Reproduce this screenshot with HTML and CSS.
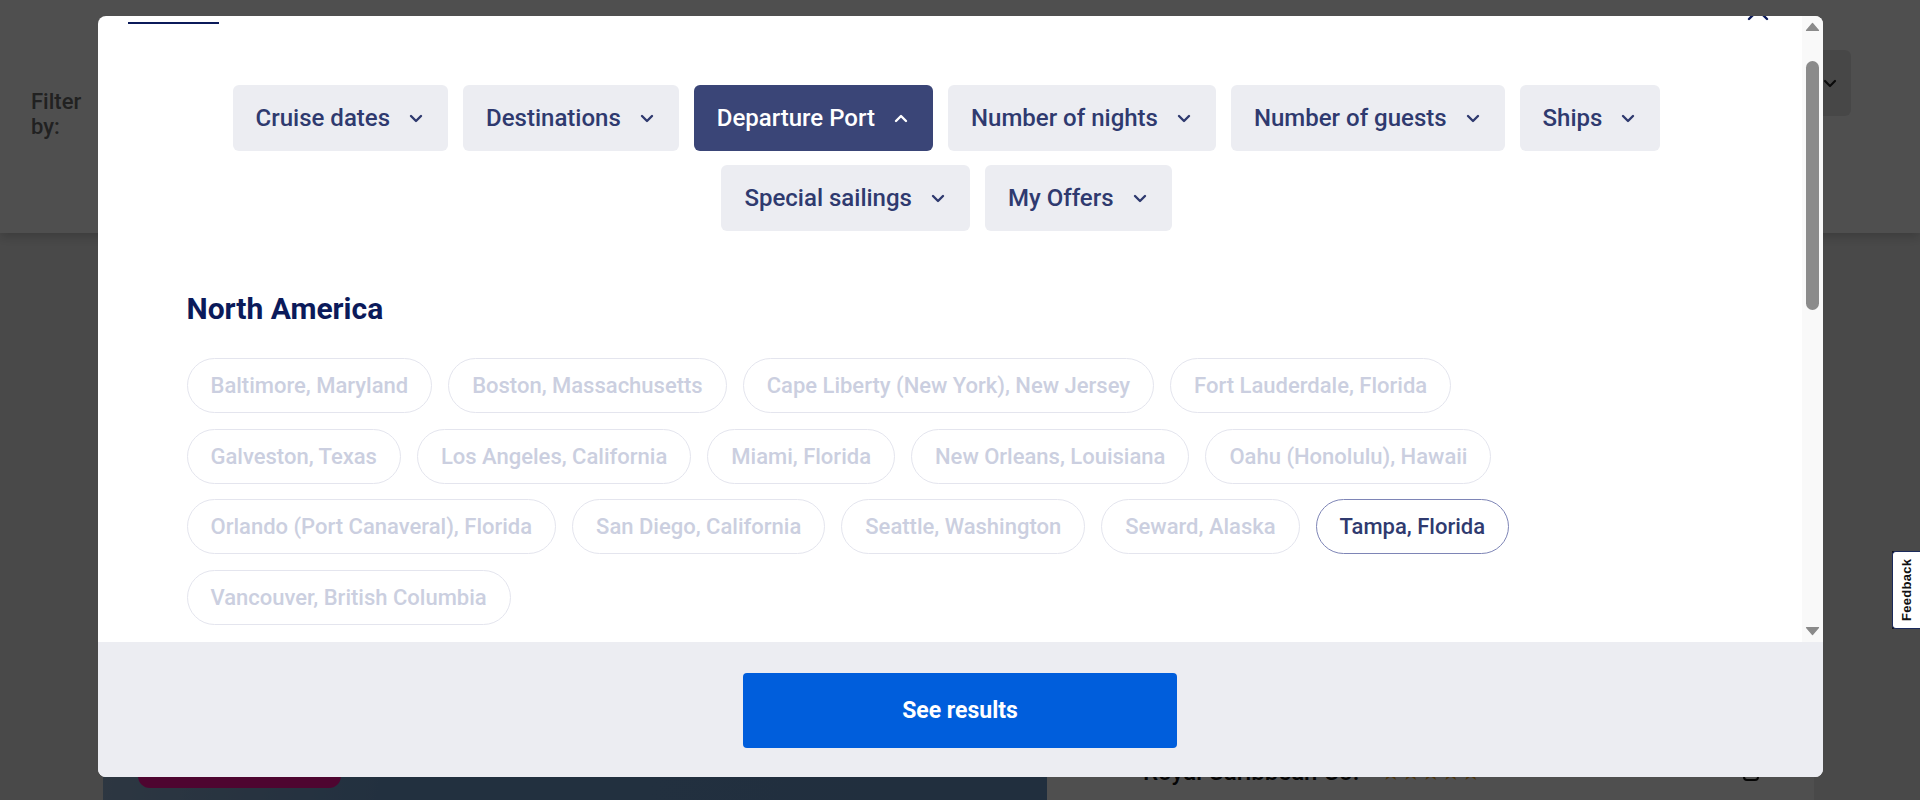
FILE: index.html
```html
<!DOCTYPE html>
<html lang="en">
<head>
<meta charset="utf-8">
<title>Find a cruise – Filters</title>
<link rel="stylesheet" href="styles.css">
</head>
<body>
<div class="page">
  <header class="page-header">
    <div class="filter-label">Filter<br>by:</div>
    <button class="sort-btn" type="button" aria-label="Sort">
      <svg width="14" height="9" viewBox="0 0 14 9"><polyline points="2,2 7,7 12,2" fill="none" stroke="#222" stroke-width="2.2" stroke-linecap="round" stroke-linejoin="round"/></svg>
    </button>
  </header>
  <main class="results">
    <article class="card">
      <div class="card-image">
        <span class="badge">Best price</span>
      </div>
      <div class="card-info">
        <div class="card-row">
          <span class="card-title">Royal Caribbean Co.</span>
          <span class="stars">★★★★★</span>
          <span class="card-actions">
            <svg width="16" height="10" viewBox="0 0 16 10"><polyline points="2,2 8,8 14,2" fill="none" stroke="#111" stroke-width="2"/></svg>
            <svg width="18" height="20" viewBox="0 0 18 20"><rect x="2" y="2" width="14" height="16" rx="3" fill="none" stroke="#111" stroke-width="2"/></svg>
          </span>
        </div>
      </div>
    </article>
  </main>
</div>

<div class="overlay">
  <div class="modal" role="dialog" aria-label="Filters">
    <div class="modal-body">
      <div class="modal-scroll" id="modalScroll">
        <div class="modal-inner">
          <div class="modal-head">
            <span class="tab">Filters</span>
            <button class="close-btn" type="button" aria-label="Close">
              <svg width="24" height="24" viewBox="0 0 24 24"><path d="M3 3 L21 21 M21 3 L3 21" fill="none" stroke="#0b1a5a" stroke-width="2.4" stroke-linecap="round"/></svg>
            </button>
          </div>

          <div class="filter-bar">
            <button class="filter-btn" type="button">Cruise dates <svg class="chev" width="14" height="9" viewBox="0 0 14 9"><polyline points="2,2 7,7 12,2"/></svg></button>
            <button class="filter-btn" type="button">Destinations <svg class="chev" width="14" height="9" viewBox="0 0 14 9"><polyline points="2,2 7,7 12,2"/></svg></button>
            <button class="filter-btn active" type="button">Departure Port <svg class="chev" width="14" height="9" viewBox="0 0 14 9"><polyline points="2,7 7,2 12,7"/></svg></button>
            <button class="filter-btn" type="button">Number of nights <svg class="chev" width="14" height="9" viewBox="0 0 14 9"><polyline points="2,2 7,7 12,2"/></svg></button>
            <button class="filter-btn" type="button">Number of guests <svg class="chev" width="14" height="9" viewBox="0 0 14 9"><polyline points="2,2 7,7 12,2"/></svg></button>
            <button class="filter-btn" type="button">Ships <svg class="chev" width="14" height="9" viewBox="0 0 14 9"><polyline points="2,2 7,7 12,2"/></svg></button>
            <button class="filter-btn" type="button">Special sailings <svg class="chev" width="14" height="9" viewBox="0 0 14 9"><polyline points="2,2 7,7 12,2"/></svg></button>
            <button class="filter-btn" type="button">My Offers <svg class="chev" width="14" height="9" viewBox="0 0 14 9"><polyline points="2,2 7,7 12,2"/></svg></button>
          </div>

          <section class="region">
            <h2 class="region-title">North America</h2>
            <div class="pills">
              <span class="pill">Baltimore, Maryland</span>
              <span class="pill">Boston, Massachusetts</span>
              <span class="pill">Cape Liberty (New York), New Jersey</span>
              <span class="pill">Fort Lauderdale, Florida</span>
              <span class="pill">Galveston, Texas</span>
              <span class="pill">Los Angeles, California</span>
              <span class="pill">Miami, Florida</span>
              <span class="pill">New Orleans, Louisiana</span>
              <span class="pill">Oahu (Honolulu), Hawaii</span>
              <span class="pill">Orlando (Port Canaveral), Florida</span>
              <span class="pill">San Diego, California</span>
              <span class="pill">Seattle, Washington</span>
              <span class="pill">Seward, Alaska</span>
              <span class="pill selected">Tampa, Florida</span>
              <span class="pill">Vancouver, British Columbia</span>
            </div>
          </section>

          <section class="region">
            <h2 class="region-title">Caribbean</h2>
            <div class="pills">
              <span class="pill">San Juan, Puerto Rico</span>
              <span class="pill">Bridgetown, Barbados</span>
            </div>
          </section>

          <section class="region">
            <h2 class="region-title">Europe</h2>
            <div class="pills">
              <span class="pill">Amsterdam, Netherlands</span>
              <span class="pill">Barcelona, Spain</span>
              <span class="pill">Civitavecchia (Rome), Italy</span>
              <span class="pill">Copenhagen, Denmark</span>
              <span class="pill">Southampton, England</span>
              <span class="pill">Ravenna, Italy</span>
            </div>
          </section>

          <section class="region">
            <h2 class="region-title">Asia &amp; South Pacific</h2>
            <div class="pills">
              <span class="pill">Singapore</span>
              <span class="pill">Sydney, Australia</span>
              <span class="pill">Brisbane, Australia</span>
              <span class="pill">Tokyo (Yokohama), Japan</span>
            </div>
          </section>
        </div>
      </div>
      <div class="scrollbar" aria-hidden="true">
        <div class="sb-btn">
          <svg width="21" height="21" viewBox="0 0 21 21"><polygon points="4.5,14.5 10.5,7.5 16.5,14.5" fill="#8b8b8b" stroke="#8b8b8b" stroke-width="1.2" stroke-linejoin="round"/></svg>
        </div>
        <div class="sb-track"><div class="sb-thumb"></div></div>
        <div class="sb-btn">
          <svg width="21" height="21" viewBox="0 0 21 21"><polygon points="4.5,6.5 10.5,13.5 16.5,6.5" fill="#8b8b8b" stroke="#8b8b8b" stroke-width="1.2" stroke-linejoin="round"/></svg>
        </div>
      </div>
    </div>
    <div class="modal-footer">
      <button class="see-results" type="button">See results</button>
    </div>
  </div>
</div>

<aside class="feedback">Feedback</aside>

<script src="script.js"></script>
</body>
</html>
```

FILE: styles.css
```css
* { box-sizing: border-box; }

html, body {
  margin: 0;
  height: 100%;
}

body {
  font-family: Roboto, "Liberation Sans", Arial, sans-serif;
  background: #ebebeb;
  overflow: hidden;
}

button { font-family: inherit; cursor: pointer; }

/* ---------- background page ---------- */
.page-header {
  height: 233px;
  background: #fff;
  display: flex;
  align-items: flex-start;
  box-shadow: 0 4px 10px rgba(0, 0, 0, 0.18);
}

.filter-label {
  margin: 89px 0 0 31px;
  font-size: 22px;
  line-height: 25px;
  color: #6b6b6b;
  font-weight: 500;
}

.sort-btn {
  margin: 50px 69px 0 auto;
  width: 66px;
  height: 66px;
  border: 0;
  border-radius: 6px;
  background: #e5e5e5;
  display: flex;
  align-items: center;
  justify-content: flex-end;
  padding-right: 14px;
}

.results {
  padding: 57px 106px 0 103px;
}

.card {
  display: flex;
  height: 540px;
}

.card-image {
  position: relative;
  width: 944px;
  background: linear-gradient(100deg, #9bb6d3 0%, #6f9ccc 35%, #6a97c8 100%);
}

.badge {
  position: absolute;
  left: 35px;
  top: 451px;
  width: 203px;
  height: 47px;
  border-radius: 12px;
  background: #fb109b;
  color: #fff;
  font-size: 16px;
  display: flex;
  align-items: center;
  justify-content: center;
}

.card-info {
  flex: 1;
  background: #fff;
  padding: 468px 54px 0 96px;
}

.card-row {
  display: flex;
  align-items: center;
  gap: 22px;
}

.card-title {
  font-size: 24px;
  line-height: 28px;
  color: #111;
  font-weight: 500;
}

.stars {
  color: #f5a623;
  font-size: 22px;
}

.card-actions {
  margin-left: auto;
  display: flex;
  align-items: center;
  gap: 48px;
}

/* ---------- modal ---------- */
.overlay {
  position: fixed;
  inset: 0;
  background: rgba(0, 0, 0, 0.69);
  display: flex;
  justify-content: center;
  align-items: flex-start;
  padding-top: 16px;
}

.modal {
  width: 1725px;
  height: 761px;
  background: #fff;
  border-radius: 8px;
  overflow: hidden;
  display: flex;
  flex-direction: column;
}

.modal-body {
  flex: 1;
  min-height: 0;
  display: flex;
}

.modal-scroll {
  flex: 1;
  overflow: hidden;
}

.scrollbar {
  width: 21px;
  background: #f9f9f9;
  display: flex;
  flex-direction: column;
}

.sb-btn {
  height: 21px;
  display: flex;
}

.sb-track {
  flex: 1;
  display: flex;
  justify-content: center;
}

.sb-thumb {
  margin-top: 24px;
  width: 13px;
  height: 249px;
  border-radius: 7px;
  background: #8b8b8b;
}

.modal-inner {
  min-height: 1468px;
  padding-bottom: 60px;
}

.modal-head {
  height: 68px;
  padding: 30px 32px 0 30px;
  display: flex;
  justify-content: space-between;
  align-items: flex-end;
}

.tab {
  min-width: 91px;
  font-size: 22px;
  line-height: 36px;
  font-weight: 700;
  color: #0b1a5a;
  border-bottom: 2px solid #0b1a5a;
  text-align: center;
}

.close-btn {
  width: 24px;
  height: 24px;
  padding: 0;
  margin-bottom: 2px;
  border: 0;
  background: none;
  display: flex;
}

.filter-bar {
  margin-top: 61px;
  padding: 0 90px 0 84px;
  display: flex;
  flex-wrap: wrap;
  justify-content: center;
  gap: 14px 15px;
}

.filter-btn {
  height: 66px;
  padding: 0 25px 0 23px;
  border: 0;
  border-radius: 6px;
  background: #ecedf2;
  color: #2f3a6f;
  font-size: 24px;
  font-weight: 500;
  display: inline-flex;
  align-items: center;
  gap: 19px;
}

.filter-btn .chev polyline {
  fill: none;
  stroke: currentColor;
  stroke-width: 2.4;
  stroke-linecap: round;
  stroke-linejoin: round;
}

.filter-btn.active {
  background: #3a4577;
  color: #fff;
}

.region {
  padding: 0 205px 0 89px;
  margin-top: 61px;
}

.region + .region { margin-top: 48px; }

.region-title {
  margin: 0;
  font-size: 30px;
  line-height: 34px;
  font-weight: 700;
  color: #0b1a5a;
}

.pills {
  margin-top: 32px;
  display: flex;
  flex-wrap: wrap;
  gap: 15.7px 16px;
}

.pill {
  height: 55px;
  padding: 0 23px;
  border: 1px solid #e4e5ee;
  border-radius: 28px;
  background: #fff;
  color: #cbcfe0;
  font-size: 22px;
  font-weight: 500;
  display: inline-flex;
  align-items: center;
}

.pill.selected {
  border-color: #7e85b6;
  color: #2f3a6f;
}

.modal-footer {
  height: 135px;
  background: #ecedf2;
  display: flex;
  justify-content: center;
  padding-top: 31px;
}

.see-results {
  width: 434px;
  height: 75px;
  border: 0;
  border-radius: 4px;
  background: #005edc;
  color: #fff;
  font-size: 23px;
  font-weight: 700;
}

/* ---------- feedback tab ---------- */
.feedback {
  position: fixed;
  right: 0;
  top: 551px;
  width: 28px;
  height: 78px;
  background: #fff;
  border: 1px solid #1b2a5c;
  border-left: 0;
  border-radius: 0 4px 4px 0;
  writing-mode: vertical-rl;
  transform: rotate(180deg);
  font-family: "Liberation Sans", Arial, sans-serif;
  font-size: 13px;
  font-weight: 700;
  color: #111;
  display: flex;
  align-items: center;
  justify-content: center;
  letter-spacing: 0.3px;
}
```

FILE: script.js
```js
document.getElementById('modalScroll').scrollTop = 60;
```
